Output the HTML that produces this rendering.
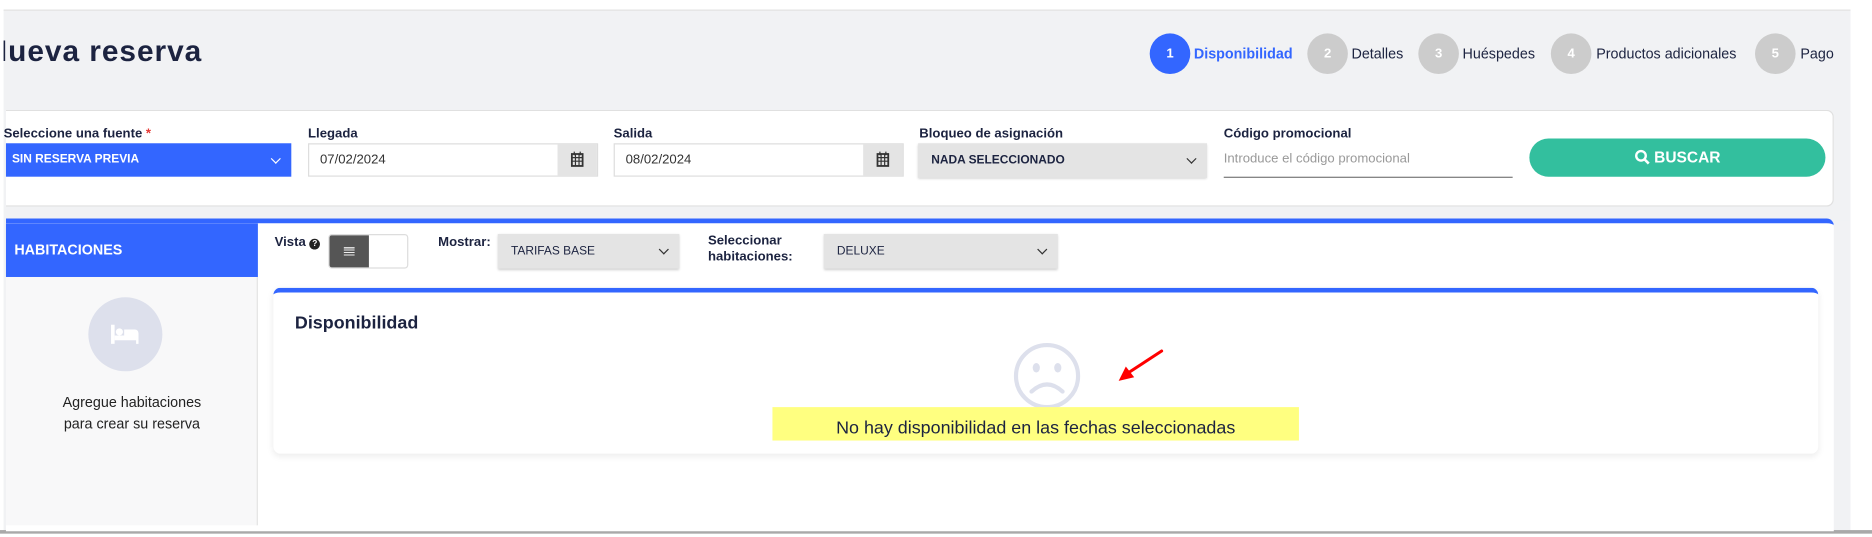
<!DOCTYPE html>
<html><head><meta charset="utf-8"><style>
*{box-sizing:border-box;margin:0;padding:0}
html,body{width:1872px;height:536px;overflow:hidden;background:#fff;font-family:"Liberation Sans",sans-serif}
#w{position:absolute;left:0;top:0;width:1568px;height:450px;transform:scale(1.19388);transform-origin:0 0}
.a{position:absolute}
.bg{left:3px;top:8px;width:1547px;height:437px;background:#f1f2f4;border-top:1px solid #e2e2e2}
.lbl{font-size:11px;font-weight:bold;color:#1c2340}
.circ{width:34px;height:34px;border-radius:50%;background:#ccc;color:#fff;font-size:11px;font-weight:bold;text-align:center;line-height:34px}
.st{font-size:12px;color:#1c2340;top:38px}
.inp{height:28px;border:1px solid #ddd;background:#fff;font-size:11px;color:#333;padding-left:9px;line-height:26px}
.add{width:33px;height:28px;background:#e4e4e4}
.sel{background:#e4e4e4;height:29px;font-size:10px;font-weight:bold;color:#1c2340;padding-left:11px;line-height:29px;box-shadow:0 1px 2px rgba(0,0,0,.2)}
.chev{position:absolute;right:10px;top:10px;width:6px;height:6px;border-right:1.3px solid #333;border-bottom:1.3px solid #333;transform:rotate(45deg)}
</style></head><body><div id="w">
<div class="a bg"></div>
<div class="a" style="left:1537px;top:185px;width:13px;height:255px;background:#f1f2f4"></div>
<div class="a" style="left:0;top:444px;width:1568px;height:3px;background:#a9a9a9"></div>
<div class="a" style="left:3px;top:27px;width:300px;height:36px;overflow:hidden"><div style="position:absolute;left:-15px;top:2px;font-size:25px;font-weight:bold;color:#1c2340;letter-spacing:.8px;white-space:nowrap">Nueva reserva</div></div>

<div class="a circ" style="left:963px;top:28px;background:#3366ff">1</div>
<div class="a st" style="left:1000px;color:#3366ff;font-weight:bold">Disponibilidad</div>
<div class="a circ" style="left:1095px;top:28px">2</div>
<div class="a st" style="left:1132px">Detalles</div>
<div class="a circ" style="left:1188px;top:28px">3</div>
<div class="a st" style="left:1225px">Huéspedes</div>
<div class="a circ" style="left:1299px;top:28px">4</div>
<div class="a st" style="left:1337px">Productos adicionales</div>
<div class="a circ" style="left:1470px;top:28px">5</div>
<div class="a st" style="left:1508px">Pago</div>

<div class="a" style="left:5px;top:92px;width:1531px;height:81px;background:#fff;border:1px solid #e0e0e0;border-left:none;border-radius:0 6px 6px 0"></div>
<div class="a lbl" style="left:3px;top:106px">Seleccione una fuente <span style="color:#e53935">*</span></div>
<div class="a lbl" style="left:258px;top:106px">Llegada</div>
<div class="a lbl" style="left:514px;top:106px">Salida</div>
<div class="a lbl" style="left:770px;top:106px">Bloqueo de asignación</div>
<div class="a lbl" style="left:1025px;top:106px">Código promocional</div>
<div class="a sel" style="left:5px;top:120px;width:239px;height:28px;background:#3366ff;color:#fff;padding-left:5px;line-height:28px;box-shadow:none">SIN RESERVA PREVIA<span class="chev" style="border-color:#fff"></span></div>
<div class="a inp" style="left:258px;top:120px;width:243px">07/02/2024</div>
<div class="a add" style="left:467px;top:120px"><svg width="33" height="28"><rect x="12" y="9" width="9" height="10" fill="none" stroke="#333" stroke-width="1.5"/><path d="M12 12h9M12 15h9M15 9v10M18 9v10M14 7v3M19 7v3" stroke="#333"/></svg></div>
<div class="a inp" style="left:514px;top:120px;width:243px">08/02/2024</div>
<div class="a add" style="left:723px;top:120px"><svg width="33" height="28"><rect x="12" y="9" width="9" height="10" fill="none" stroke="#333" stroke-width="1.5"/><path d="M12 12h9M12 15h9M15 9v10M18 9v10M14 7v3M19 7v3" stroke="#333"/></svg></div>
<div class="a sel" style="left:769px;top:120px;width:242px">NADA SELECCIONADO<span class="chev"></span></div>
<div class="a" style="left:1025px;top:120px;width:242px;height:29px;border-bottom:1px solid #777;font-size:11px;color:#999;line-height:27px">Introduce el código promocional</div>
<div class="a" style="left:1281px;top:116px;width:248px;height:32px;border-radius:16px;background:#33bf9e;color:#fff;font-size:13px;font-weight:bold;text-align:center;line-height:32px"><svg width="13" height="13" style="vertical-align:-2px"><circle cx="5.5" cy="5.5" r="4" fill="none" stroke="#fff" stroke-width="2"/><path d="M8.5 8.5L12 12" stroke="#fff" stroke-width="2.2"/></svg> BUSCAR</div>

<div class="a" style="left:5px;top:183px;width:1531px;height:262px;background:#fff;border-top:4px solid #3366ff;border-radius:0 6px 0 0"></div>
<div class="a" style="left:5px;top:187px;width:211px;height:253px;background:#f8f8f9;border-right:1px solid #e3e3e3"></div>
<div class="a" style="left:5px;top:187px;width:211px;height:45px;background:#3366ff;color:#fff;font-size:12px;font-weight:bold;line-height:45px;padding-left:7px">HABITACIONES</div>
<div class="a" style="left:74px;top:249px;width:62px;height:62px;border-radius:50%;background:#dde0ec"><svg width="62" height="62"><rect x="19" y="23" width="3" height="16" fill="#fff"/><circle cx="26" cy="29" r="3" fill="#fff"/><path d="M22 32h20v7h-2v-3H22z M30 27h9a3 3 0 0 1 3 3v2H30z" fill="#fff"/></svg></div>
<div class="a" style="left:5px;top:328px;width:211px;text-align:center;font-size:12px;line-height:18px;color:#222">Agregue habitaciones<br>para crear su reserva</div>

<div class="a lbl" style="left:230px;top:197px">Vista <span style="display:inline-block;width:9px;height:9px;border-radius:50%;background:#222;color:#fff;font-size:7px;text-align:center;line-height:9px">?</span></div>
<div class="a" style="left:275px;top:196px;width:67px;height:29px;border:1px solid #ddd;border-radius:3px;background:#fff;overflow:hidden"><div style="width:33px;height:29px;background:#555;position:relative"><div style="position:absolute;left:12px;top:10px;width:9px;height:7px;background:repeating-linear-gradient(#eee 0 1px,#555 1px 2px)"></div></div></div>
<div class="a lbl" style="left:367px;top:197px">Mostrar:</div>
<div class="a sel" style="left:417px;top:196px;width:152px;font-weight:normal;color:#1c2340">TARIFAS BASE<span class="chev"></span></div>
<div class="a lbl" style="left:593px;top:196px;line-height:13px">Seleccionar<br>habitaciones:</div>
<div class="a sel" style="left:690px;top:196px;width:196px;font-weight:normal">DELUXE<span class="chev"></span></div>

<div class="a" style="left:229px;top:241px;width:1294px;height:139px;background:#fff;border-top:4px solid #3366ff;border-radius:6px;box-shadow:0 2px 6px rgba(0,0,0,.08)"></div>
<div class="a" style="left:247px;top:262px;font-size:15px;font-weight:bold;color:#1c2340">Disponibilidad</div>
<svg class="a" style="left:845px;top:283px" width="64" height="64"><circle cx="32" cy="32" r="26" fill="none" stroke="#dde0ec" stroke-width="3.5"/><ellipse cx="23" cy="25" rx="3" ry="4" fill="#dde0ec"/><ellipse cx="41" cy="25" rx="3" ry="4" fill="#dde0ec"/><path d="M19 45q13-12 26 0" fill="none" stroke="#dde0ec" stroke-width="3.5" stroke-linecap="round"/></svg>
<svg class="a" style="left:930px;top:288px" width="50" height="36"><path d="M43 6L14 25" stroke="#f00" stroke-width="2.5" stroke-linecap="round"/><path d="M7 31L13 19 20 28z" fill="#f00"/></svg>
<div class="a" style="left:647px;top:341px;width:441px;height:28px;background:#ffff80;text-align:center;font-size:15px;line-height:36px;color:#1c2340">No hay disponibilidad en las fechas seleccionadas</div>
</div></body></html>
